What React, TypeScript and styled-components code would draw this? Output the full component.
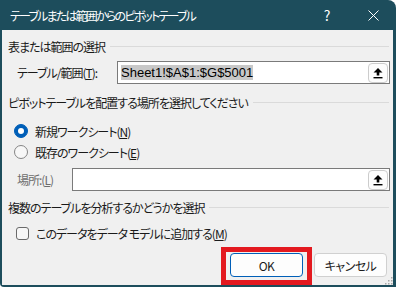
import styled, { createGlobalStyle } from 'styled-components';

const GlobalStyle = createGlobalStyle`
  body {
    margin: 0;
    background: #ffffff;
  }
`;

const UI_FONT = `"Noto Sans CJK JP", "Liberation Sans", sans-serif`;

const Window = styled.div`
  position: relative;
  width: 396px;
  height: 287px;
  display: flex;
  flex-direction: column;
  background: #1d4d5c;
  border-top-right-radius: 8px;
  border-bottom-left-radius: 4px;
  overflow: hidden;
  font-family: ${UI_FONT};
  font-feature-settings: 'palt' 1;
  font-size: 12px;
  color: #1a1a1a;
`;

const TitleBar = styled.div`
  height: 30px;
  display: flex;
  align-items: center;
  padding-left: 10px;
  color: #ffffff;
`;

const Title = styled.div`
  flex: 1;
  font-size: 12px;
  letter-spacing: -1.8px;
`;

const CaptionButton = styled.div`
  width: 46px;
  height: 30px;
  display: flex;
  align-items: center;
  justify-content: center;
  color: #ffffff;
  font-size: 14px;
`;

const Body = styled.div`
  flex: 1;
  margin: 0 3px 2px 2px;
  padding: 8px 3px 0 6px;
  background: #f0f0f0;
  display: flex;
  flex-direction: column;
  letter-spacing: -1px;
`;

const SectionHeader = styled.div<{ $top?: number }>`
  display: flex;
  align-items: center;
  gap: 5px;
  height: 16px;
  margin-top: ${(p) => p.$top ?? 0}px;
  &::after {
    content: '';
    flex: 1;
    border-top: 1px solid #dadada;
    margin-right: 1px;
  }
`;

const FieldRow = styled.div<{ $top: number }>`
  display: flex;
  align-items: center;
  margin-top: ${(p) => p.$top}px;
  padding-left: 9px;
`;

const FieldLabel = styled.label<{ $width: number; $disabled?: boolean }>`
  width: ${(p) => p.$width}px;
  flex-shrink: 0;
  color: ${(p) => (p.$disabled ? '#6d6d6d' : '#1a1a1a')};
`;

const Field = styled.div`
  flex: 1;
  height: 23px;
  box-sizing: border-box;
  border: 1px solid #7a7a7a;
  background: #ffffff;
  display: flex;
  align-items: center;
  justify-content: space-between;
  padding: 0 1px 0 3px;
`;

const SelectedText = styled.span`
  font-family: 'Liberation Sans', sans-serif;
  font-size: 13px;
  line-height: 15px;
  letter-spacing: 0;
  background: #c8c8c8;
  color: #000000;
`;

const PickButton = styled.div`
  width: 20px;
  height: 20px;
  box-sizing: border-box;
  border: 1px solid #cccccc;
  border-radius: 4px;
  background: #fdfdfd;
  display: flex;
  align-items: center;
  justify-content: center;
`;

const OptionRow = styled.div<{ $top: number; $indent: number }>`
  display: flex;
  align-items: center;
  height: 20px;
  margin-top: ${(p) => p.$top}px;
  padding-left: ${(p) => p.$indent}px;
  gap: 7px;
`;

const Radio = styled.span<{ $checked?: boolean }>`
  width: 14px;
  height: 14px;
  box-sizing: border-box;
  border-radius: 50%;
  border: 1px solid ${(p) => (p.$checked ? '#005fb8' : '#858585')};
  background: ${(p) => (p.$checked ? '#005fb8' : '#f7f7f7')};
  display: flex;
  align-items: center;
  justify-content: center;
  &::after {
    content: '';
    display: ${(p) => (p.$checked ? 'block' : 'none')};
    width: 6px;
    height: 6px;
    border-radius: 50%;
    background: #ffffff;
  }
`;

const Checkbox = styled.span`
  width: 13px;
  height: 13px;
  box-sizing: border-box;
  border: 1px solid #6a6a6a;
  border-radius: 3px;
  background: #f7f7f7;
`;

const Key = styled.span`
  text-decoration: underline;
  text-underline-offset: 1px;
`;

const ButtonRow = styled.div`
  display: flex;
  justify-content: flex-end;
  align-items: flex-start;
  gap: 2px;
  margin-top: 4px;
  padding-right: 3px;
`;

const Highlight = styled.div`
  border: 5px solid #e3191f;
  padding: 1px 4px 3px 4px;
`;

const DialogButton = styled.button<{ $primary?: boolean }>`
  width: 73px;
  height: 24px;
  margin-top: ${(p) => (p.$primary ? 0 : 6)}px;
  border-radius: 4px;
  border: 1px solid ${(p) => (p.$primary ? '#005fb8' : '#d0d0d0')};
  background: #fdfdfd;
  font-family: ${UI_FONT};
  font-feature-settings: 'palt' 1;
  font-size: 12px;
  letter-spacing: -0.5px;
  color: #1a1a1a;
  padding: 0;
`;

const Grip = styled.svg`
  position: absolute;
  right: 3px;
  bottom: 2px;
`;

const UploadIcon = () => (
  <svg width="12" height="12" viewBox="0 0 12 12">
    <path d="M6 1 L10.5 5.5 L7.3 5.5 L7.3 8.5 L4.7 8.5 L4.7 5.5 L1.5 5.5 Z" fill="#000" />
    <rect x="1.5" y="10" width="9" height="1.4" fill="#000" />
  </svg>
);

const CloseIcon = () => (
  <svg width="11" height="11" viewBox="0 0 11 11">
    <path d="M0.5 0.5 L10.5 10.5 M10.5 0.5 L0.5 10.5" stroke="#fff" strokeWidth="1" />
  </svg>
);

const App = () => {
  const dots = [
    [7, 1],
    [4, 4],
    [7, 4],
    [1, 7],
    [4, 7],
    [7, 7],
  ];

  return (
    <>
      <GlobalStyle />
      <Window>
        <TitleBar>
          <Title>テーブルまたは範囲からのピボットテーブル</Title>
          <CaptionButton>?</CaptionButton>
          <CaptionButton>
            <CloseIcon />
          </CaptionButton>
        </TitleBar>
        <Body>
          <SectionHeader>表または範囲の選択</SectionHeader>
          <FieldRow $top={7}>
            <FieldLabel $width={100}>
              テーブル/範囲(<Key>T</Key>):
            </FieldLabel>
            <Field>
              <SelectedText>Sheet1!$A$1:$G$5001</SelectedText>
              <PickButton>
                <UploadIcon />
              </PickButton>
            </Field>
          </FieldRow>

          <SectionHeader $top={10}>ピボットテーブルを配置する場所を選択してください</SectionHeader>
          <OptionRow $top={11} $indent={6}>
            <Radio $checked />
            <span>
              新規ワークシート(<Key>N</Key>)
            </span>
          </OptionRow>
          <OptionRow $top={1} $indent={6}>
            <Radio />
            <span>
              既存のワークシート(<Key>E</Key>)
            </span>
          </OptionRow>
          <FieldRow $top={6}>
            <FieldLabel $width={55} $disabled>
              場所:(<Key>L</Key>)
            </FieldLabel>
            <Field>
              <span />
              <PickButton>
                <UploadIcon />
              </PickButton>
            </Field>
          </FieldRow>

          <SectionHeader $top={8}>複数のテーブルを分析するかどうかを選択</SectionHeader>
          <OptionRow $top={8} $indent={8}>
            <Checkbox />
            <span>
              このデータをデータ モデルに追加する(<Key>M</Key>)
            </span>
          </OptionRow>

          <ButtonRow>
            <Highlight>
              <DialogButton $primary>OK</DialogButton>
            </Highlight>
            <DialogButton>キャンセル</DialogButton>
          </ButtonRow>
        </Body>
        <Grip width="9" height="9" viewBox="0 0 9 9">
          {dots.map(([x, y], i) => (
            <rect key={i} x={x} y={y} width="1.5" height="1.5" fill="#a8a8a8" />
          ))}
        </Grip>
      </Window>
    </>
  );
};

export default App;
